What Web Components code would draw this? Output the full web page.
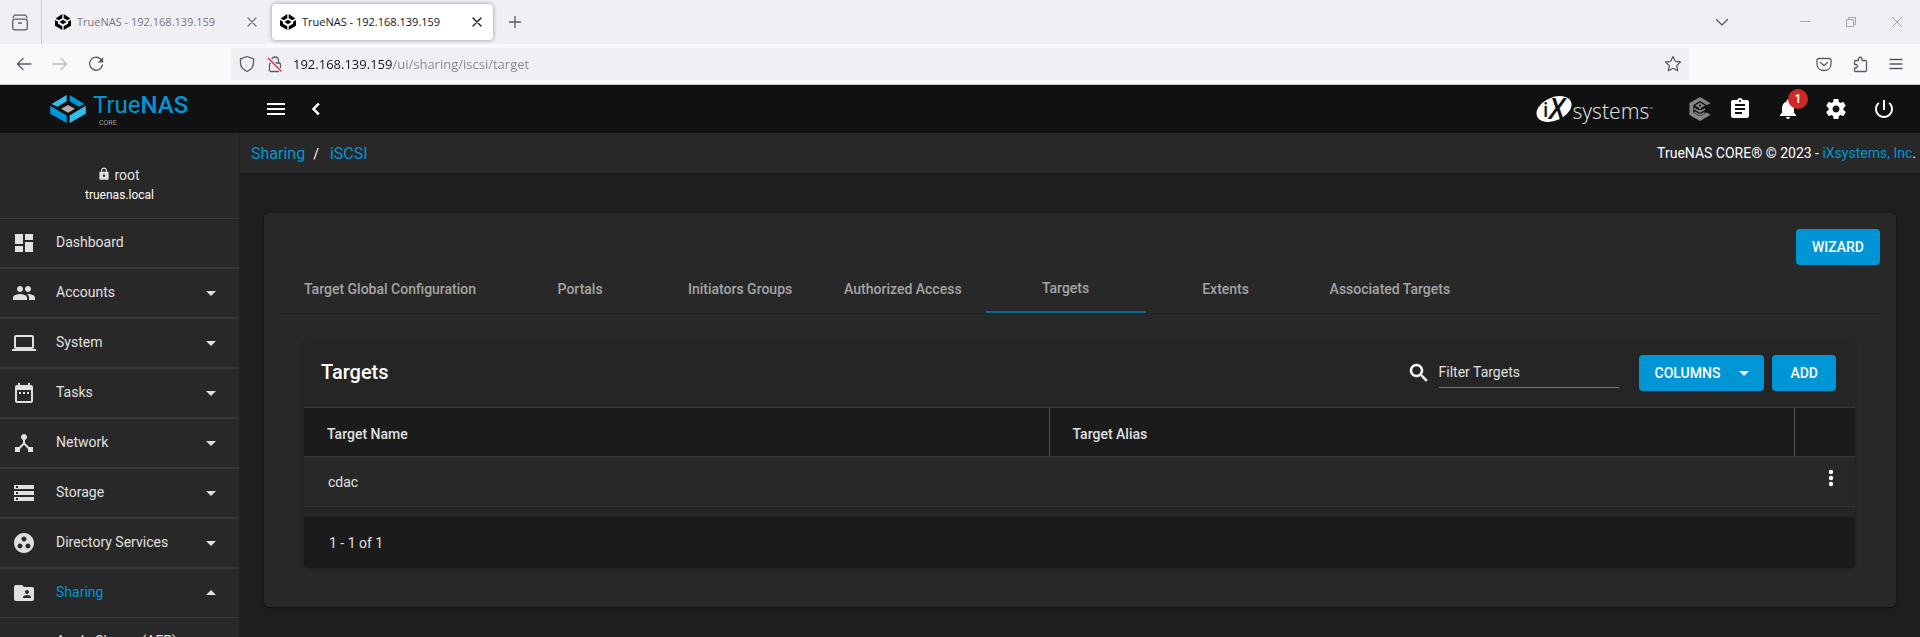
<!DOCTYPE html>
<html lang="en">
<head>
<meta charset="utf-8">
<meta name="viewport" content="width=device-width, initial-scale=1">
<title>TrueNAS - 192.168.139.159</title>
<style>
  :root {
    --primary: #0095d5;
    --bg1: #1e1e1e;
    --bg2: #282828;
    --topbar: #111111;
    --lines: #383838;
    --fg1: #ffffff;
    --fg2: #e0e0e0;
    --chrome-font: "Open Sans", "Noto Sans", sans-serif;
  }
  html, body { height: 100%; }
  body {
    margin: 0;
    display: flex;
    flex-direction: column;
    overflow: hidden;
    background: var(--bg1);
    color: var(--fg1);
    font: 14px/20px Roboto, sans-serif;
  }
</style>
</head>
<body>
<browser-window-bar></browser-window-bar>
<browser-nav-bar></browser-nav-bar>
<nas-app></nas-app>

<script>
const ICONS = {
  menu: '<path d="M3 18h18v-2H3v2zm0-5h18v-2H3v2zm0-7v2h18V6H3z"/>',
  back: '<path d="M15.41 7.41L14 6l-6 6 6 6 1.41-1.41L10.83 12z" stroke="currentColor" stroke-width=".6"/>',
  dashboard: '<path d="M3 13h8V3H3v10zm0 8h8v-6H3v6zm10 0h8V11h-8v10zm0-18v6h8V3h-8z"/>',
  people: '<path d="M16 11c1.66 0 2.99-1.34 2.99-3S17.66 5 16 5c-1.66 0-3 1.34-3 3s1.34 3 3 3zm-8 0c1.66 0 2.99-1.34 2.99-3S9.66 5 8 5C6.34 5 5 6.34 5 8s1.34 3 3 3zm0 2c-2.33 0-7 1.17-7 3.5V19h14v-2.5c0-2.33-4.67-3.5-7-3.5zm8 0c-.29 0-.62.02-.97.05 1.16.84 1.97 1.97 1.97 3.45V19h6v-2.5c0-2.33-4.67-3.5-7-3.5z"/>',
  laptop: '<path d="M20 18c1.1 0 1.99-.9 1.99-2L22 6c0-1.1-.9-2-2-2H4c-1.1 0-2 .9-2 2v10c0 1.1.9 2 2 2H0v2h24v-2h-4zM4 6h16v10H4V6z"/>',
  calendar: '<path d="M9 11H7v2h2v-2zm4 0h-2v2h2v-2zm4 0h-2v2h2v-2zm2-7h-1V2h-2v2H8V2H6v2H5c-1.11 0-1.99.9-1.99 2L3 20c0 1.1.89 2 2 2h14c1.1 0 2-.9 2-2V6c0-1.1-.9-2-2-2zm0 16H5V9h14v11z"/>',
  hub: '<path d="M17 16l-4-4V8.82C14.16 8.4 15 7.3 15 6c0-1.66-1.34-3-3-3S9 4.34 9 6c0 1.3.84 2.4 2 2.82V12l-4 4H3v5h5v-3.05l4-4.2 4 4.2V21h5v-5h-4z"/>',
  storage: '<path d="M2 20h20v-4H2v4zm2-3h2v2H4v-2zM2 4v4h20V4H2zm4 3H4V5h2v2zm-4 7h20v-4H2v4zm2-3h2v2H4v-2z"/>',
  group: '<path d="M12 2C6.48 2 2 6.48 2 12s4.48 10 10 10 10-4.48 10-10S17.52 2 12 2zM8 17.5c-1.38 0-2.5-1.12-2.5-2.5s1.12-2.5 2.5-2.5 2.5 1.12 2.5 2.5-1.12 2.5-2.5 2.5zM9.5 8c0-1.38 1.12-2.5 2.5-2.5s2.5 1.12 2.5 2.5-1.12 2.5-2.5 2.5S9.5 9.38 9.5 8zm6.5 9.5c-1.38 0-2.5-1.12-2.5-2.5s1.12-2.5 2.5-2.5 2.5 1.12 2.5 2.5-1.12 2.5-2.5 2.5z"/>',
  shared: '<path d="M20 6h-8l-2-2H4c-1.1 0-1.99.9-1.99 2L2 18c0 1.1.9 2 2 2h16c1.1 0 2-.9 2-2V8c0-1.1-.9-2-2-2zm-5 3c1.1 0 2 .9 2 2s-.9 2-2 2-2-.9-2-2 .9-2 2-2zm4 8h-8v-1c0-1.33 2.67-2 4-2s4 .67 4 2v1z"/>',
  lock: '<path d="M18 8h-1V6c0-2.76-2.24-5-5-5S7 3.24 7 6v2H6c-1.1 0-2 .9-2 2v10c0 1.1.9 2 2 2h12c1.1 0 2-.9 2-2V10c0-1.1-.9-2-2-2zm-6 9c-1.1 0-2-.9-2-2s.9-2 2-2 2 .9 2 2-.9 2-2 2zm3.1-9H8.9V6c0-1.71 1.39-3.1 3.1-3.1 1.71 0 3.1 1.39 3.1 3.1v2z"/>',
  down: '<path d="M7 10l5 5 5-5z"/>',
  up: '<path d="M7 14l5-5 5 5z"/>',
  clipboard: '<path d="M19 3h-4.18C14.4 1.84 13.3 1 12 1c-1.3 0-2.4.84-2.82 2H5c-1.1 0-2 .9-2 2v14c0 1.1.9 2 2 2h14c1.1 0 2-.9 2-2V5c0-1.1-.9-2-2-2zm-7 0c.55 0 1 .45 1 1s-.45 1-1 1-1-.45-1-1 .45-1 1-1zm2 14H7v-2h7v2zm3-4H7v-2h10v2zm0-4H7V7h10v2z"/>',
  bell: '<path d="M12 22c1.1 0 2-.9 2-2h-4c0 1.1.89 2 2 2zm6-6v-5c0-3.07-1.64-5.64-4.5-6.32V4c0-.83-.67-1.5-1.5-1.5s-1.5.67-1.5 1.5v.68C7.63 5.36 6 7.92 6 11v5l-2 2v1h16v-1l-2-2z"/>',
  gear: '<path d="M19.43 12.98c.04-.32.07-.64.07-.98s-.03-.66-.07-.98l2.11-1.65c.19-.15.24-.42.12-.64l-2-3.46c-.12-.22-.39-.3-.61-.22l-2.49 1c-.52-.4-1.08-.73-1.69-.98l-.38-2.65C14.46 2.18 14.25 2 14 2h-4c-.25 0-.46.18-.49.42l-.38 2.65c-.61.25-1.17.59-1.69.98l-2.49-1c-.23-.09-.49 0-.61.22l-2 3.46c-.13.22-.07.49.12.64l2.11 1.65c-.04.32-.07.65-.07.98s.03.66.07.98l-2.11 1.65c-.19.15-.24.42-.12.64l2 3.46c.12.22.39.3.61.22l2.49-1c.52.4 1.08.73 1.69.98l.38 2.65c.03.24.24.42.49.42h4c.25 0 .46-.18.49-.42l.38-2.65c.61-.25 1.17-.59 1.69-.98l2.49 1c.23.09.49 0 .61-.22l2-3.46c.12-.22.07-.49-.12-.64l-2.11-1.65zM12 15.5c-1.93 0-3.5-1.57-3.5-3.5s1.57-3.5 3.5-3.5 3.5 1.57 3.5 3.5-1.57 3.5-3.5 3.5z"/>',
  power: '<path d="M13 3h-2v10h2V3zm4.83 2.17l-1.42 1.42C17.99 7.86 19 9.81 19 12c0 3.87-3.13 7-7 7s-7-3.13-7-7c0-2.19 1.01-4.14 2.58-5.42L6.17 5.17C4.23 6.82 3 9.26 3 12c0 4.97 4.03 9 9 9s9-4.03 9-9c0-2.74-1.23-5.18-3.17-6.83z"/>',
  search: '<path stroke="currentColor" stroke-width=".5" d="M15.5 14h-.79l-.28-.27C15.41 12.59 16 11.11 16 9.5 16 5.91 13.09 3 9.5 3S3 5.91 3 9.5 5.91 16 9.5 16c1.61 0 3.09-.59 4.23-1.57l.27.28v.79l5 4.99L20.49 19l-4.99-5zm-6 0C7.01 14 5 11.99 5 9.5S7.01 5 9.5 5 14 7.01 14 9.5 11.99 14 9.5 14z"/>',
  more: '<circle cx="12" cy="6" r="2.200"/><circle cx="12" cy="12" r="2.200"/><circle cx="12" cy="18" r="2.200"/>',
  command: '<path d="M22.5 6.2 12 0 1.5 6.1v11.8L12 24l10.5-6.2-3.8-2.2L12 19.5 5.3 15.7V8.300L12 4.500l6.700 3.800z"/><path d="M12 5.500 17 8.500 12 11.500 7 8.500z"/><path d="M12 9v11M6 11.500l6 3.500 5-3M6.500 15l5.500 3 4.500-2.500" fill="none" stroke="currentColor" stroke-width="1.500"/><path d="M12 4.500l-6 3.700M12 4.500l6 3.700M6.500 9.700l5.500 3.200 5.500-3.200M6.500 13.500l5.500 3.200 4.500-2.500" fill="none" stroke="#111" stroke-width=".9"/><circle cx="12" cy="8.500" r="1.100" fill="#111"/>',
  /* Browser toolbar glyphs: thin strokes on the same 24 grid, 16px art size */
  tabsview: '<g class="s"><rect x="4.700" y="9.200" width="14.600" height="10.600" rx="2"/><path d="M6.500 5.200h11M5 7.500c.5-1.500 1-2.300 2-2.300M19 7.500c-.5-1.500-1-2.300-2-2.300M10.500 13h3"/></g>',
  close: '<path class="s" d="M8 8l8 8M16 8l-8 8"/>',
  plus: '<path class="s" d="M12 6.500v11M6.500 12h11"/>',
  chevron: '<path class="s" d="M6.500 9.500l5.500 5.500 5.500-5.500"/>',
  minimise: '<path class="t" d="M7 11.500h10"/>',
  restore: '<path class="t" d="M7.500 9.500h7v7h-7zM9.500 9.500v-2h7v7h-2"/>',
  closewin: '<path class="t" d="M7 7l10 10M17 7L7 17"/>',
  arrowleft: '<path class="s" d="M19 12H5.500M11 6.500L5.500 12l5.500 5.500"/>',
  arrowright: '<path class="s" d="M5 12h13.500M13 6.500l5.500 5.500-5.500 5.500"/>',
  reload: '<path class="s" d="M17.800 8.500A6.500 6.500 0 1 0 18.500 13"/><path d="M19.200 5v5.500h-5.500z"/>',
  shield: '<path class="s" d="M12 4.500l6.500 2.300v4c0 4-2.500 7-6.500 8.700-4-1.700-6.500-4.700-6.500-8.700v-4z"/>',
  insecure: '<g class="s"><rect x="6.500" y="11" width="11" height="8.500" rx="1.500"/><path d="M8.500 11V8.500a3.500 3.500 0 0 1 7 0V11"/></g><path d="M5 6l13.500 13.500" stroke="#f0f0f4" stroke-width="3.500"/><path d="M5 6l13.500 13.500" stroke="#e22850" stroke-width="1.400"/>',
  star: '<path class="s" d="M12 4.500l2.300 4.800 5.200.7-3.800 3.600.9 5.200-4.600-2.500-4.600 2.500.9-5.200L4.500 10l5.200-.7z"/>',
  pocket: '<g class="s"><path d="M6.500 6.500h11c1 0 1.500.5 1.500 1.500v4c0 4-3 6.500-7 6.500s-7-2.500-7-6.500V8c0-1 .5-1.500 1.500-1.500z"/><path d="M8.500 10.500l3.500 3.300 3.500-3.300"/></g>',
  puzzle: '<path class="s" d="M10.500 8.500V7a1.700 1.700 0 0 1 3.500 0v1.500h3.500c.7 0 1 .4 1 1v9c0 .7-.4 1-1 1h-10c-.7 0-1-.4-1-1V16H8a1.800 1.800 0 0 0 0-3.500H6.500V9.500c0-.7.4-1 1-1z"/>',
  hamburger: '<path class="s" d="M6 7.500h12M6 12h12M6 16.500h12"/>',
  favicon: '<path d="M11.300 4v4.200L7.700 10.300 4.600 8.500zM12.700 4v4.200l3.600 2.100 3.100-1.800zM4 10l3 1.700v2l4.300 2.500V20L4 15.700zM20 10l-3 1.700v2l-4.300 2.500V20l7.300-4.300zM12 9.700l3.500 2.200L12 14.200l-3.500-2.300z"/>'
};

/* Registers an element whose shadow tree is cloned from one template */
function component(name, markup) {
  const template = document.createElement('template');
  customElements.define(name, class extends HTMLElement {
    connectedCallback() {
      if (this.shadowRoot) return;
      template.innerHTML = typeof markup === 'function' ? markup(this) : markup;
      this.attachShadow({ mode: 'open' }).append(template.content.cloneNode(true));
    }
  });
}

component('nas-icon', el => `
  <style>
    :host { display: inline-block; flex: none; width: 24px; height: 24px; }
    svg { display: block; width: 100%; height: 100%; fill: currentColor; }
    .s { fill: none; stroke: currentColor; stroke-width: 1.3; stroke-linecap: round; stroke-linejoin: round; }
    .t { fill: none; stroke: currentColor; stroke-width: 1; }
  </style>
  <svg viewBox="0 0 24 24" aria-hidden="true">${ICONS[el.getAttribute('name')]}</svg>`);

component('icon-button', el => `
  <style>
    :host { display: block; flex: none; }
    button { display: flex; align-items: center; justify-content: center; width: 100%; height: 100%;
      padding: 0; border: 0; background: none; color: inherit; cursor: pointer; }
  </style>
  <button type="button" aria-label="${el.getAttribute('label')}"><nas-icon name="${el.getAttribute('icon')}"></nas-icon></button>`);

/* ---------- Browser chrome ---------- */

component('browser-tab', `
  <style>
    :host { display: flex; align-items: center; flex: none; box-sizing: border-box; width: 221px; height: 36px;
      padding: 0 4px; border-radius: 4px; color: #76757e; font: 11px/16px var(--chrome-font); }
    :host([active]) { background: #fff; color: #15141a; box-shadow: 0 0 4px rgba(0, 0, 0, .4); }
    .title { flex: 1; display: flex; align-items: center; gap: 2px; padding: 0; border: 0; background: none;
      color: inherit; font: inherit; white-space: nowrap; }
    .title nas-icon { color: #000; }
    icon-button { width: 24px; height: 24px; }
  </style>
  <button class="title" type="button"><nas-icon name="favicon"></nas-icon><slot></slot></button>
  <icon-button icon="close" label="Close tab"></icon-button>`);

component('browser-window-bar', `
  <style>
    :host { display: flex; align-items: center; flex: none; height: 44px; background: #f0f0f4; color: #5b5b66; }
    .view { width: 42px; padding-right: 2px; box-sizing: border-box; height: 44px; border-right: 1px solid #c9c9d0; }
    .tabs { display: flex; gap: 4px; padding: 0 0 0 5px; }
    .new { width: 24px; height: 24px; margin-left: 10px; }
    .list { width: 24px; height: 24px; margin: 0 48px 0 auto; }
    .win { display: flex; color: #a3a3aa; }
    .win icon-button { width: 46px; height: 44px; }
  </style>
  <icon-button class="view" icon="tabsview" label="View tabs"></icon-button>
  <div class="tabs">
    <browser-tab>TrueNAS - 192.168.139.159</browser-tab>
    <browser-tab active>TrueNAS - 192.168.139.159</browser-tab>
  </div>
  <icon-button class="new" icon="plus" label="New tab"></icon-button>
  <icon-button class="list" icon="chevron" label="List all tabs"></icon-button>
  <div class="win">
    <icon-button icon="minimise" label="Minimise"></icon-button>
    <icon-button icon="restore" label="Restore"></icon-button>
    <icon-button icon="closewin" label="Close window"></icon-button>
  </div>`);

component('browser-nav-bar', `
  <style>
    :host { display: flex; align-items: center; flex: none; box-sizing: border-box; height: 41px;
      padding: 0 6px; background: #f9f9fb; border-bottom: 1px solid #cccccc; color: #5b5b66; }
    .group { display: flex; }
    icon-button { width: 36px; height: 32px; }
    .off { color: #b9b9c0; }
    .url { display: flex; align-items: center; flex: 1; min-width: 0; height: 32px; margin: 0 117px; box-sizing: border-box;
      padding: 0 4px 0 2px; border-radius: 4px; background: #f0f0f4; }
    .url icon-button { width: 28px; }
    .url icon-button:last-child { width: 24px; }
    /* The host part of the address is darker than its path */
    input { flex: 1; min-width: 0; padding: 0; margin-left: 4px; border: 0; outline: 0; font: 13px/20px var(--chrome-font);
      color: transparent; background: linear-gradient(90deg, #15141a 100px, #85848d 100px); background-clip: text; -webkit-background-clip: text; }
  </style>
  <div class="group">
    <icon-button icon="arrowleft" label="Back"></icon-button>
    <icon-button class="off" icon="arrowright" label="Forward"></icon-button>
    <icon-button icon="reload" label="Reload"></icon-button>
  </div>
  <div class="url">
    <icon-button icon="shield" label="Tracking protection"></icon-button>
    <icon-button icon="insecure" label="Connection not secure"></icon-button>
    <input type="text" aria-label="Address" value="192.168.139.159/ui/sharing/iscsi/target">
    <icon-button icon="star" label="Bookmark this page"></icon-button>
  </div>
  <div class="group">
    <icon-button icon="pocket" label="Save to Pocket"></icon-button>
    <icon-button icon="puzzle" label="Extensions"></icon-button>
    <icon-button icon="hamburger" label="Application menu"></icon-button>
  </div>`);

/* ---------- Application ---------- */

component('nas-logo', `
  <style>
    :host { display: flex; align-items: center; gap: 7px; }
    svg { display: block; width: 36px; height: 28px; }
    .name { display: flex; flex-direction: column; color: var(--primary); font-size: 24px; line-height: 28px; }
    b { font-weight: 500; }
    small { padding-left: 6px; color: #a0a0a0; font-size: 7px; line-height: 8px; }
  </style>
  <svg viewBox="0 0 108 85" aria-hidden="true">
    <path fill="#31beec" d="M50 0v19L22 36 4 27zM108 33v24L59 85V62z"/>
    <path fill="#0095d5" d="M59 0v19l28 17 17-9zM0 33v24l50 28V62z"/>
    <path fill="#aeaeae" d="M54 30l21 12-21 12-21-12z"/>
  </svg>
  <span class="name"><span>True<b>NAS</b></span><small>CORE</small></span>`);

component('ix-logo', `
  <style>
    :host { display: flex; align-items: center; }
    svg { display: block; overflow: visible; width: 36px; height: 28px; }
    .word { padding-top: 4px; color: #dcdcdc; font: 300 21px/24px "Noto Sans", sans-serif; }
    sup { font-size: 5px; line-height: 5px; vertical-align: 8px; }
  </style>
  <svg viewBox="0 0 36 28" aria-hidden="true">
    <ellipse cx="18" cy="14" rx="18.500" ry="11.500" transform="rotate(-24 18 14)" fill="#fff"/>
    <text x="7" y="22" font-family="Open Sans, sans-serif" font-size="19" font-weight="600" fill="#111">i</text>
    <text x="13" y="24" font-family="Open Sans, sans-serif" font-size="28" font-style="italic" font-weight="600" fill="#111">X</text>
  </svg>
  <span class="word">systems<sup>™</sup></span>`);

component('nas-topbar', `
  <style>
    :host { display: flex; align-items: center; height: 48px; padding: 0 12px; }
    icon-button { width: 32px; height: 48px; }
    .menu { width: 48px; }
    ix-logo { margin: 0 31px 0 auto; }
    .tools { display: flex; }
    .tools icon-button { width: 48px; }
    .tools .command { width: 32px; color: #868686; }
    .alerts { position: relative; }
    .badge { position: absolute; top: 4px; right: 4px; width: 20px; height: 20px; border-radius: 50%;
      background: #ce2929; font: 600 12px/20px Roboto, sans-serif; text-align: center; }
  </style>
  <icon-button class="menu" icon="menu" label="Toggle menu"></icon-button>
  <icon-button icon="back" label="Collapse"></icon-button>
  <ix-logo></ix-logo>
  <div class="tools">
    <icon-button class="command" icon="command" label="TrueCommand"></icon-button>
    <icon-button icon="clipboard" label="Task manager"></icon-button>
    <div class="alerts"><icon-button icon="bell" label="Alerts"></icon-button><span class="badge">1</span></div>
    <icon-button icon="gear" label="Settings"></icon-button>
    <icon-button icon="power" label="Power"></icon-button>
  </div>`);

component('nas-breadcrumb', `
  <style>
    :host { display: flex; align-items: center; justify-content: space-between; flex: none; height: 40px; padding: 0 4px 0 11px;
      background: var(--bg2); box-shadow: 0 1px 2px rgba(0, 0, 0, .3); }
    a { color: var(--primary); text-decoration: none; }
    nav { display: flex; align-items: baseline; gap: 8px; padding-top: 2px; font-size: 16px; }
    nav a + span { margin-right: 3px; font-size: 14px; }
  </style>
  <nav aria-label="Breadcrumb"><a href="#sharing">Sharing</a><span>/</span><a href="#iscsi">iSCSI</a></nav>
  <span>TrueNAS CORE® © 2023 - <a href="#ixsystems">iXsystems, Inc</a>.</span>`);

component('nav-item', el => `
  <style>
    :host { display: block; border-top: 1px solid var(--lines); border-bottom: 1px solid var(--lines); }
    a { display: flex; align-items: center; height: 48px; padding: 0 16px 0 12px; color: var(--fg2); text-decoration: none; }
    .label { flex: 1; padding: 0 0 2px 20px; }
    :host([active]) .label { color: var(--primary); }
  </style>
  <a href="#"><nas-icon name="${el.getAttribute('icon')}"></nas-icon><span class="label"><slot></slot></span>
  ${el.hasAttribute('arrow') ? `<nas-icon name="${el.getAttribute('arrow')}"></nas-icon>` : ''}</a>`);

component('nas-sidenav', `
  <style>
    :host { display: block; overflow: hidden auto; scrollbar-width: none; background: var(--bg2); color: var(--fg2);
      border-right: 1px solid #202020; }
    .user { display: flex; flex-direction: column; align-items: center; height: 51px; padding: 32px 0 2px; }
    .name { display: flex; align-items: center; gap: 3px; padding-right: 2px; }
    .name nas-icon { width: 14px; height: 14px; margin-bottom: 2px; }
    .host { color: var(--fg1); font-size: 12px; }
    .sub { display: flex; align-items: center; height: 46px; padding-left: 56px; color: var(--fg2); text-decoration: none; }
  </style>
  <div class="user">
    <span class="name"><nas-icon name="lock"></nas-icon>root</span>
    <span class="host">truenas.local</span>
  </div>
  <nav aria-label="Main">
    <nav-item icon="dashboard">Dashboard</nav-item>
    <nav-item icon="people" arrow="down">Accounts</nav-item>
    <nav-item icon="laptop" arrow="down">System</nav-item>
    <nav-item icon="calendar" arrow="down">Tasks</nav-item>
    <nav-item icon="hub" arrow="down">Network</nav-item>
    <nav-item icon="storage" arrow="down">Storage</nav-item>
    <nav-item icon="group" arrow="down">Directory Services</nav-item>
    <nav-item icon="shared" arrow="up" active>Sharing</nav-item>
    <a class="sub" href="#">Apple Shares (AFP)</a>
  </nav>`);

component('nas-button', el => `
  <style>
    :host { display: block; flex: none; }
    button { display: flex; align-items: center; gap: 12px; height: 36px; padding: 0 16px; border: 0; border-radius: 4px;
      background: var(--primary); color: #fff; font: 500 14px/20px Roboto, sans-serif; text-transform: uppercase; cursor: pointer; }
    :host([wide]) button { padding: 0 18px; }
    :host([menu]) button { padding: 0 8px 0 16px; }
  </style>
  <button type="button"><slot></slot>${el.hasAttribute('menu') ? '<nas-icon name="down"></nas-icon>' : ''}</button>`);

component('tab-link', `
  <style>
    :host { display: block; }
    a { display: flex; align-items: center; justify-content: center; box-sizing: border-box; min-width: 160px; height: 48px;
      padding: 0 24px; color: #a4a4a4; font-weight: 500; text-decoration: none; white-space: nowrap; }
    :host([active]) a { border-bottom: 2px solid #0b6a94; }
  </style>
  <a href="#"><slot></slot></a>`);

component('targets-table', `
  <style>
    :host { display: block; background: #252525; border-radius: 4px; box-shadow: 0 1px 3px rgba(0, 0, 0, .25); overflow: hidden; }
    header { display: flex; align-items: center; height: 69px; padding: 0 19px 0 17px; }
    h2 { flex: 1; margin: 0; font-size: 20px; font-weight: 500; line-height: 24px; padding-bottom: 2px; }
    .filter { display: flex; align-items: center; gap: 8px; width: 212px; margin-right: 20px; }
    input { flex: 1; min-width: 0; box-sizing: border-box; height: 30px; padding: 0; border: 0; border-bottom: 1px solid #777; outline: 0;
      background: none; color: var(--fg1); font: 14px/20px Roboto, sans-serif; }
    input::placeholder { color: var(--fg2); opacity: 1; }
    .actions { display: flex; gap: 8px; }
    table { width: 100%; border-collapse: collapse; table-layout: fixed; color: var(--fg2); }
    .tools { width: 61px; }
    th, td { box-sizing: border-box; padding: 0 23px; text-align: left; }
    th { height: 49px; background: #1b1b1b; border: 0 solid #3a3a3a; border-width: 1px 0; font-weight: 500; padding-top: 4px; }
    th:not(:first-child) { border-left: 1px solid #555; }
    td { height: 50px; padding-left: 24px; background: #282828; border-bottom: 1px solid #333; }
    td:last-child { padding: 0 12px 0 0; }
    td icon-button { width: 24px; height: 40px; margin: 0 0 8px auto; color: var(--fg1); }
    footer { display: flex; align-items: center; height: 51px; margin-top: 10px; padding: 0 25px; background: #1b1b1b; color: var(--fg2); }
  </style>
  <header>
    <h2>Targets</h2>
    <label class="filter"><nas-icon name="search"></nas-icon><input type="text" placeholder="Filter Targets" aria-label="Filter Targets"></label>
    <div class="actions"><nas-button menu>Columns</nas-button><nas-button wide>Add</nas-button></div>
  </header>
  <table>
    <colgroup><col><col><col class="tools"></colgroup>
    <thead><tr><th scope="col">Target Name</th><th scope="col">Target Alias</th><th scope="col"></th></tr></thead>
    <tbody><tr><td>cdac</td><td></td><td><icon-button icon="more" label="Row actions"></icon-button></td></tr></tbody>
  </table>
  <footer>1 - 1 of 1</footer>`);

component('sharing-card', `
  <style>
    :host { display: block; margin: 40px 24px 0; padding: 16px 16px 39px; background: var(--bg2); border-radius: 5px;
      box-shadow: 0 1px 3px rgba(0, 0, 0, .5); }
    .wizard { display: flex; justify-content: flex-end; }
    nav { display: flex; border-bottom: 1px solid #222; }
    targets-table { margin: 24px 25px 0 24px; }
  </style>
  <div class="wizard"><nas-button>Wizard</nas-button></div>
  <nav aria-label="iSCSI">
    <tab-link>Target Global Configuration</tab-link>
    <tab-link>Portals</tab-link>
    <tab-link>Initiators Groups</tab-link>
    <tab-link>Authorized Access</tab-link>
    <tab-link active>Targets</tab-link>
    <tab-link>Extents</tab-link>
    <tab-link>Associated Targets</tab-link>
  </nav>
  <targets-table></targets-table>`);

component('nas-app', `
  <style>
    :host { flex: 1; min-height: 0; display: grid; grid-template: 48px minmax(0, 1fr) / 240px minmax(0, 1fr); }
    .top { grid-column: 1 / -1; display: grid; grid-template-columns: subgrid; background: var(--topbar); }
    nas-logo { padding-left: 50px; }
    main { overflow: hidden; }
  </style>
  <div class="top"><nas-logo></nas-logo><nas-topbar></nas-topbar></div>
  <nas-sidenav></nas-sidenav>
  <main>
    <nas-breadcrumb></nas-breadcrumb>
    <sharing-card></sharing-card>
  </main>`);
</script>
</body>
</html>
